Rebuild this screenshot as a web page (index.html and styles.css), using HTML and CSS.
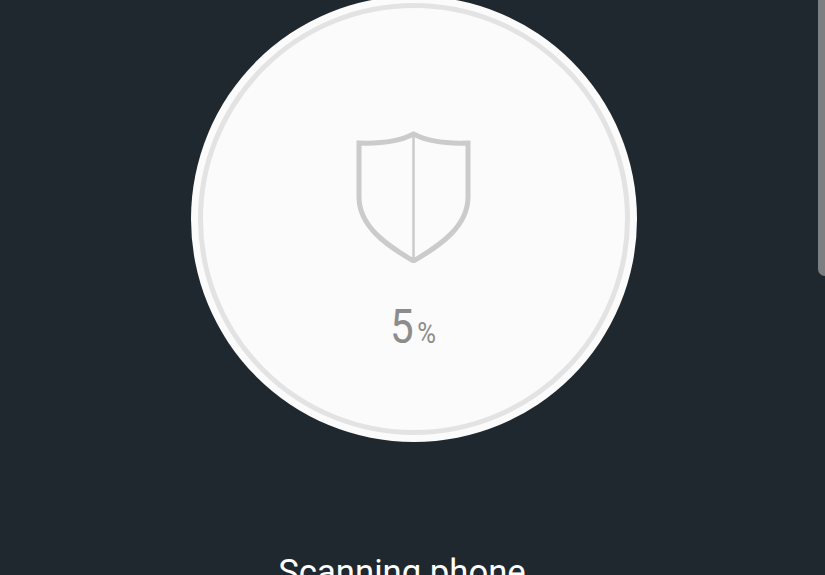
FILE: index.html
```html
<!DOCTYPE html>
<html lang="en">
<head>
  <meta charset="UTF-8">
  <title>Scanning phone</title>
  <link rel="stylesheet" href="styles.css">
</head>
<body>
  <div class="scrollbar"></div>
  <main class="screen">
    <div class="dial">
      <div class="dial-ring">
        <svg class="shield" width="116" height="132" viewBox="0 0 116 132">
          <path d="M57.5 3 C46 9 28 13 3 12 L3 66 C3 95 30 114 57.5 130 C85 114 112 95 112 66 L112 12 C87 13 69 9 57.5 3 Z" fill="none" stroke="#cbcbcb" stroke-width="5"/>
          <path d="M57.5 4 L57.5 128" stroke="#cbcbcb" stroke-width="2.5"/>
        </svg>
        <div class="progress">
          <span class="progress-value">5</span><span class="progress-unit">%</span>
        </div>
      </div>
    </div>
    <p class="caption">Scanning phone</p>
  </main>
</body>
</html>
```

FILE: styles.css
```css
html, body {
  height: 100%;
  margin: 0;
}
body {
  font-family: Roboto, "Liberation Sans", sans-serif;
  background: #20282f;
  overflow: hidden;
  position: relative;
}
.screen {
  display: flex;
  flex-direction: column;
  align-items: center;
}
.dial {
  width: 446px;
  height: 446px;
  margin: -4px 0 0 3px;
  padding: 7px;
  box-sizing: border-box;
  border-radius: 50%;
  background: #fbfbfb;
  flex-shrink: 0;
}
.dial-ring {
  height: 100%;
  box-sizing: border-box;
  border: 5px solid #e3e3e3;
  border-radius: 50%;
  display: flex;
  flex-direction: column;
  align-items: center;
  padding-top: 123px;
}
.shield {
  display: block;
}
.progress {
  display: flex;
  align-items: baseline;
  justify-content: center;
  margin-top: 37px;
  color: #8c8c8c;
  line-height: 54px;
}
.progress-value {
  font-size: 49px;
  display: inline-block;
  transform: scaleX(0.86);
  margin-left: -3px;
}
.progress-unit {
  font-size: 29px;
  display: inline-block;
  transform: scaleX(0.88);
  margin-left: 1px;
}
.caption {
  margin: 108px 21px 0 0;
  color: #fff;
  font-size: 34.7px;
  font-weight: 400;
  line-height: 44px;
}
.scrollbar {
  position: absolute;
  top: 0;
  right: 0;
  width: 7px;
  height: 276px;
  background: #7b7f82;
  border-bottom-left-radius: 8px;
}
```
